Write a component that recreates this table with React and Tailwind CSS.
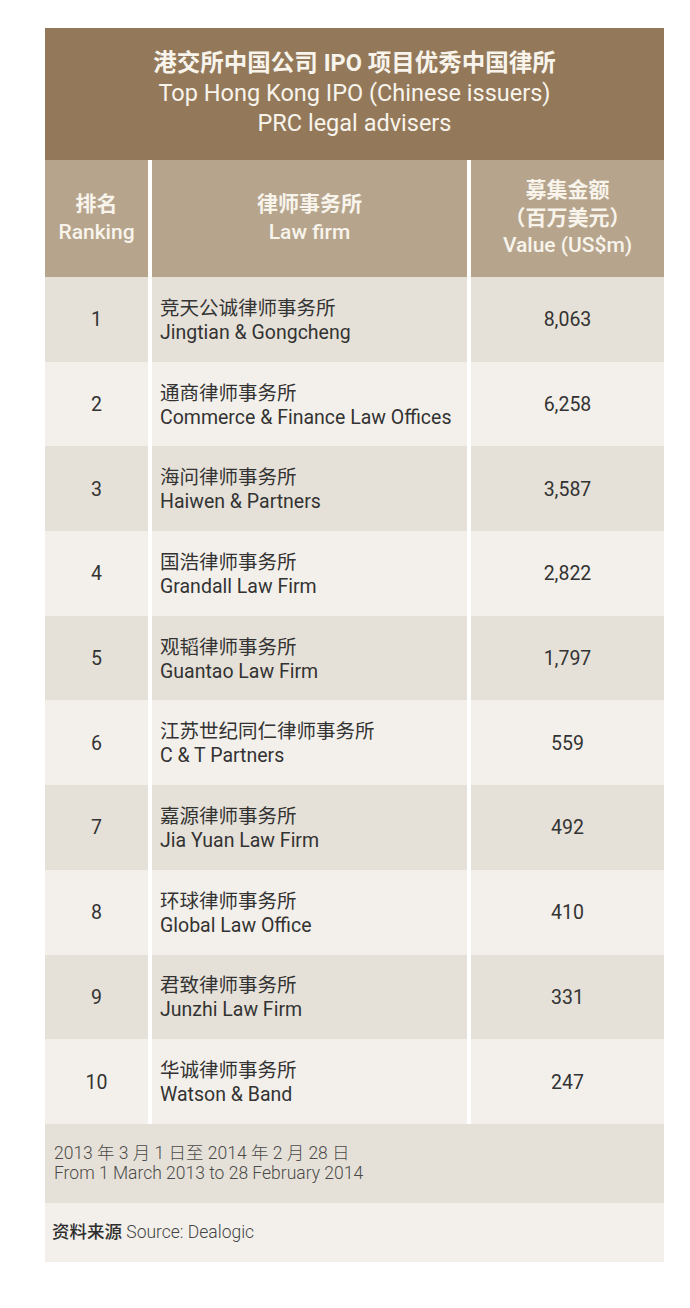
import React from 'react'

const rows = [
    { rank: 1, cn: '竞天公诚律师事务所', en: 'Jingtian & Gongcheng', value: '8,063' },
    { rank: 2, cn: '通商律师事务所', en: 'Commerce & Finance Law Offices', value: '6,258' },
    { rank: 3, cn: '海问律师事务所', en: 'Haiwen & Partners', value: '3,587' },
    { rank: 4, cn: '国浩律师事务所', en: 'Grandall Law Firm', value: '2,822' },
    { rank: 5, cn: '观韬律师事务所', en: 'Guantao Law Firm', value: '1,797' },
    { rank: 6, cn: '江苏世纪同仁律师事务所', en: 'C & T Partners', value: '559' },
    { rank: 7, cn: '嘉源律师事务所', en: 'Jia Yuan Law Firm', value: '492' },
    { rank: 8, cn: '环球律师事务所', en: 'Global Law Office', value: '410' },
    { rank: 9, cn: '君致律师事务所', en: 'Junzhi Law Firm', value: '331' },
    { rank: 10, cn: '华诚律师事务所', en: 'Watson & Band', value: '247' },
]

const font = "font-['Roboto','Noto_Sans_CJK_SC',sans-serif]"

const App = () => {
    return (
        <div className={`w-[690px] h-[1308px] bg-white pt-[28px] pl-[45px] ${font}`}>
            <div className='w-[619px]'>
                {/* title */}
                <div className='h-[132px] bg-[#93795a] flex flex-col items-center justify-center text-[#f8f4ec] text-[23.5px] leading-[30px] pb-[2px]'>
                    <p className='font-bold'>港交所中国公司 IPO 项目优秀中国律所</p>
                    <p>Top Hong Kong IPO (Chinese issuers)</p>
                    <p>PRC legal advisers</p>
                </div>

                {/* column headers */}
                <div className='grid grid-cols-[103px_315px_193px] gap-x-[4px] bg-white text-[#f8f4ec] text-[21px] leading-[27.5px]'>
                    <div className='h-[117px] bg-[#b6a58c] flex flex-col items-center justify-center'>
                        <p className='font-bold'>排名</p>
                        <p className='font-medium'>Ranking</p>
                    </div>
                    <div className='h-[117px] bg-[#b6a58c] flex flex-col items-center justify-center'>
                        <p className='font-bold'>律师事务所</p>
                        <p className='font-medium'>Law firm</p>
                    </div>
                    <div className='h-[117px] bg-[#b6a58c] flex flex-col items-center justify-center'>
                        <p className='font-bold'>募集金额</p>
                        <p className='font-bold'>（百万美元）</p>
                        <p className='font-medium'>Value (US$m)</p>
                    </div>
                </div>

                {/* rows */}
                {
                    rows.map((item, index) => {
                        const bg = index % 2 === 0 ? 'bg-[#e6e1d8]' : 'bg-[#f3f0eb]'
                        return (
                            <div key={index} className='grid grid-cols-[103px_315px_193px] gap-x-[4px] bg-white text-[#333] text-[19.5px] leading-[24px]'>
                                <div className={`h-[84.7px] ${bg} flex items-center justify-center pt-[2px]`}>{item.rank}</div>
                                <div className={`h-[84.7px] ${bg} flex flex-col justify-center pl-[8px] pt-[3px]`}>
                                    <p>{item.cn}</p>
                                    <p>{item.en}</p>
                                </div>
                                <div className={`h-[84.7px] ${bg} flex items-center justify-center pt-[2px]`}>{item.value}</div>
                            </div>
                        )
                    })
                }

                {/* footer */}
                <div className='h-[79px] bg-[#e6e1d8] flex flex-col justify-center pl-[9px] text-[#4a4a4a] text-[17.5px] leading-[20px] font-light'>
                    <p>2013 年 3 月 1 日至 2014 年 2 月 28 日</p>
                    <p>From 1 March 2013 to 28 February 2014</p>
                </div>
                <div className='h-[59px] bg-[#f3f0eb] flex items-center pl-[7px] text-[#444] text-[17.5px] font-light'>
                    <p><span className='font-medium text-[#2e2e2e]'>资料来源</span> Source: Dealogic</p>
                </div>
            </div>
        </div>
    )
}

export default App
